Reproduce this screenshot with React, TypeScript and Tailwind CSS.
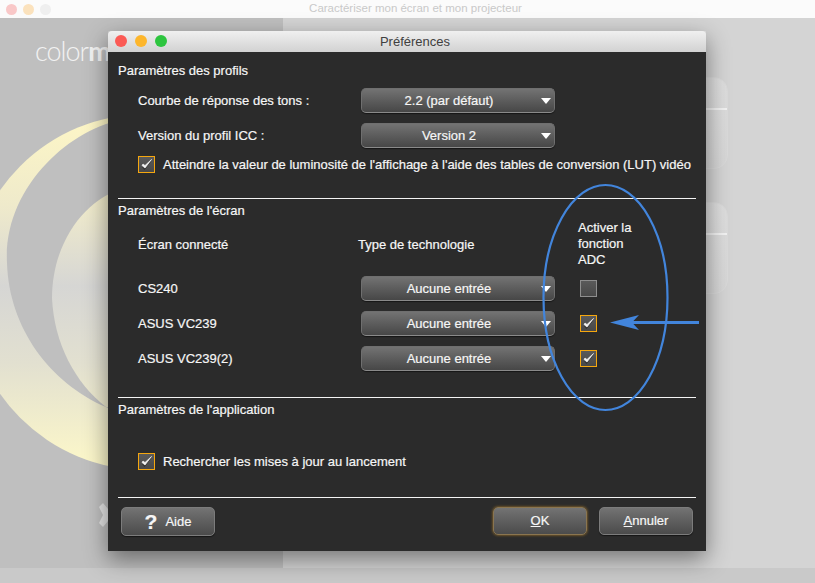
import React from 'react';

const font = { fontFamily: '"Liberation Sans", Arial, sans-serif' };

const Checkbox: React.FC<{ checked?: boolean }> = ({ checked = true }) => (
  <span
    className={`flex h-[17px] w-[17px] shrink-0 items-center justify-center border bg-gradient-to-b from-[#5a5a5a] to-[#484848] ${
      checked ? 'border-[#f5a70f]' : 'border-[#8e8e8e]'
    }`}
  >
    {checked && (
      <svg width="15" height="15" viewBox="0 0 15 15">
        <path d="M3 10 L5.5 13 L12.5 4 L12 3.5 L5.5 10 L4 8.5 Z" fill="#1c1c1c" opacity="0.6" />
        <path d="M3 8.5 L6 11 L12.5 2.5 L6 8.5 L4 7 Z" fill="#f4f4f4" stroke="#f4f4f4" strokeWidth="0.7" strokeLinejoin="round" />
      </svg>
    )}
  </span>
);

const Select: React.FC<{ label: string }> = ({ label }) => (
  <div className="relative flex h-[25px] w-[194px] items-center justify-center rounded-[5px] border border-[#6f6f6f] border-b-[#8a8a8a] bg-gradient-to-b from-[#737373] to-[#474747] pr-[18px] text-[#f6f6f6] shadow-[0_1px_1px_rgba(0,0,0,0.5)]">
    {label}
    <svg className="absolute right-[3px] top-[9px]" width="10" height="6" viewBox="0 0 10 6">
      <path d="M0 0 H10 L5 6 Z" fill="#fff" />
    </svg>
  </div>
);

const Button: React.FC<{ children: React.ReactNode; focused?: boolean; tall?: boolean }> = ({ children, focused, tall }) => (
  <button
    className={`flex w-[94px] items-center justify-center rounded-[5px] border bg-gradient-to-b from-[#737373] to-[#4b4b4b] text-[#f6f6f6] ${
      tall ? 'h-[29px]' : 'h-[28px]'
    } ${
      focused
        ? 'border-[#8a7550] shadow-[0_0_3px_rgba(230,160,40,0.7)]'
        : 'border-[#7c7c7c] shadow-[0_1px_1px_rgba(0,0,0,0.5)]'
    }`}
  >
    {children}
  </button>
);

const Card: React.FC = () => (
  <div className="flex h-[92px] w-[340px] flex-col rounded-[14px] border border-[#dadada] bg-gradient-to-b from-[#dedede] to-[#d6d6d6]">
    <div className="h-[32px] border-b-2 border-[#f2f2f2]" />
  </div>
);

const Art: React.FC = () => (
  <svg className="absolute inset-0" width="283" height="550" viewBox="0 0 283 550">
    <defs>
      <linearGradient id="cream" gradientUnits="userSpaceOnUse" x1="0" y1="100" x2="0" y2="450">
        <stop offset="0" stopColor="#fdf6c6" />
        <stop offset="0.25" stopColor="#efeacb" />
        <stop offset="0.48" stopColor="#d6d6d4" />
        <stop offset="0.7" stopColor="#e2e0d0" />
        <stop offset="1" stopColor="#fdf8c9" />
      </linearGradient>
    </defs>
    <circle cx="146" cy="274" r="178" fill="url(#cream)" />
    <path d="M125 101 C70 110 3 170 7 245 C9 310 50 365 106 389 L125 400 Z" fill="#bfbfbf" />
    <path d="M125 170 C85 180 52 225 52 280 C54 325 75 365 106 389 L125 390 Z" fill="url(#cream)" />
    <path d="M99 489 L103 485 L108 491 V503 L103 509 L99 505 L103 497 Z" fill="#e4e4e4" />
  </svg>
);

export default function App() {
  return (
    <div className="relative flex h-[583px] w-[815px] flex-col overflow-hidden bg-[#c9c9c9]" style={font}>
      {/* window behind the dialog */}
      <div className="relative flex h-[18px] items-center justify-center bg-[#fbfbfb] pl-[16px] text-[11.5px] text-[#c9c9c9]">
        <div className="absolute left-[6px] top-[4px] flex gap-[6px]">
          <span className="h-[11px] w-[11px] rounded-full bg-[#f9c8c8]" />
          <span className="h-[11px] w-[11px] rounded-full bg-[#fbe2bd]" />
          <span className="h-[11px] w-[11px] rounded-full bg-[#efefef]" />
        </div>
        Caractériser mon écran et mon projecteur
      </div>
      <div className="flex h-[550px]">
        <div className="relative w-[283px] overflow-hidden bg-[#bfbfbf]">
          <Art />
          <div
            className="absolute left-[35px] top-[17px] text-[27px] leading-[32px] tracking-[-1px] text-[#f2f2f2]"
            style={{ fontFamily: 'Lato, sans-serif', fontWeight: 300 }}
          >
            color<span className="font-bold">m</span>
          </div>
        </div>
        <div className="flex flex-1 flex-col items-end gap-[33px] bg-[#d4d4d4] pr-[87px] pt-[59px]">
          <Card />
          <Card />
        </div>
      </div>

      {/* dialog */}
      <div className="absolute left-[108px] top-[31px] flex h-[520px] w-[598px] flex-col shadow-[0_8px_22px_rgba(0,0,0,0.45)]">
        <div className="relative flex h-[21px] items-center justify-center rounded-t-[4px] bg-gradient-to-b from-[#f0f0f0] to-[#d2d2d2] pl-[16px] text-[13px] text-[#404040]">
          <div className="absolute left-[7px] top-[4px] flex gap-[8px]">
            <span className="h-[12px] w-[12px] rounded-full bg-[#fb5a55]" />
            <span className="h-[12px] w-[12px] rounded-full bg-[#fdb62c]" />
            <span className="h-[12px] w-[12px] rounded-full bg-[#2dc53f]" />
          </div>
          Préférences
        </div>
        <div className="flex flex-1 flex-col bg-[#2b2b2b] px-[10px] pt-[11px] text-[13px] leading-4 text-[#f6f6f6] [-webkit-text-stroke:0.2px_#f6f6f6]">
          <div>Paramètres des profils</div>
          <div className="mt-[9px] grid grid-cols-[223px_1fr] items-center gap-y-[10px] pl-[20px]">
            <span>Courbe de réponse des tons :</span>
            <Select label="2.2 (par défaut)" />
            <span>Version du profil ICC :</span>
            <Select label="Version 2" />
          </div>
          <label className="mt-[8px] flex items-center gap-[8px] pl-[20px]">
            <Checkbox />
            Atteindre la valeur de luminosité de l'affichage à l'aide des tables de conversion (LUT) vidéo
          </label>
          <div className="mt-[25px] h-px bg-[#f4f4f4]" />

          <div className="mt-[4px]">Paramètres de l'écran</div>
          <div className="mt-[1px] grid grid-cols-[220px_220px_1fr] items-center gap-y-[10px] pl-[20px]">
            <span className="flex h-[46px] items-center pt-[3px]">Écran connecté</span>
            <span className="flex h-[46px] items-center pt-[3px]">Type de technologie</span>
            <span className="h-[46px]">
              Activer la
              <br />
              fonction
              <br />
              ADC
            </span>
            {[
              { name: 'CS240', checked: false },
              { name: 'ASUS VC239', checked: true },
              { name: 'ASUS VC239(2)', checked: true },
            ].map((row) => (
              <React.Fragment key={row.name}>
                <span>{row.name}</span>
                <div className="pl-[3px]">
                  <Select label="Aucune entrée" />
                </div>
                <div className="pl-[2px]">
                  <Checkbox checked={row.checked} />
                </div>
              </React.Fragment>
            ))}
          </div>
          <div className="mt-[26px] h-px bg-[#f4f4f4]" />

          <div className="mt-[4px]">Paramètres de l'application</div>
          <label className="mt-[35px] flex items-center gap-[8px] pl-[20px]">
            <Checkbox />
            Rechercher les mises à jour au lancement
          </label>
          <div className="mt-[27px] h-px bg-[#f4f4f4]" />

          <div className="mt-[9px] flex items-start px-[3px]">
            <Button tall>
              <span className="mr-[8px] text-[21px] font-bold leading-none">?</span>
              Aide
            </Button>
            <div className="ml-auto flex gap-[12px]">
              <Button focused>
                <span>
                  <u>O</u>K
                </span>
              </Button>
              <Button>
                <span>
                  <u>A</u>nnuler
                </span>
              </Button>
            </div>
          </div>
        </div>
      </div>

      {/* blue annotation drawn on top of the screenshot */}
      <svg className="pointer-events-none absolute inset-0" width="815" height="583" viewBox="0 0 815 583">
        <ellipse cx="605.5" cy="297.5" rx="62" ry="112.5" fill="none" stroke="#4285dc" strokeWidth="2.2" />
        <path d="M630 322.5 H699" stroke="#4285dc" strokeWidth="3" />
        <path d="M610 322.5 L639 315 L632 322.5 L639 330 Z" fill="#4285dc" />
      </svg>
    </div>
  );
}
